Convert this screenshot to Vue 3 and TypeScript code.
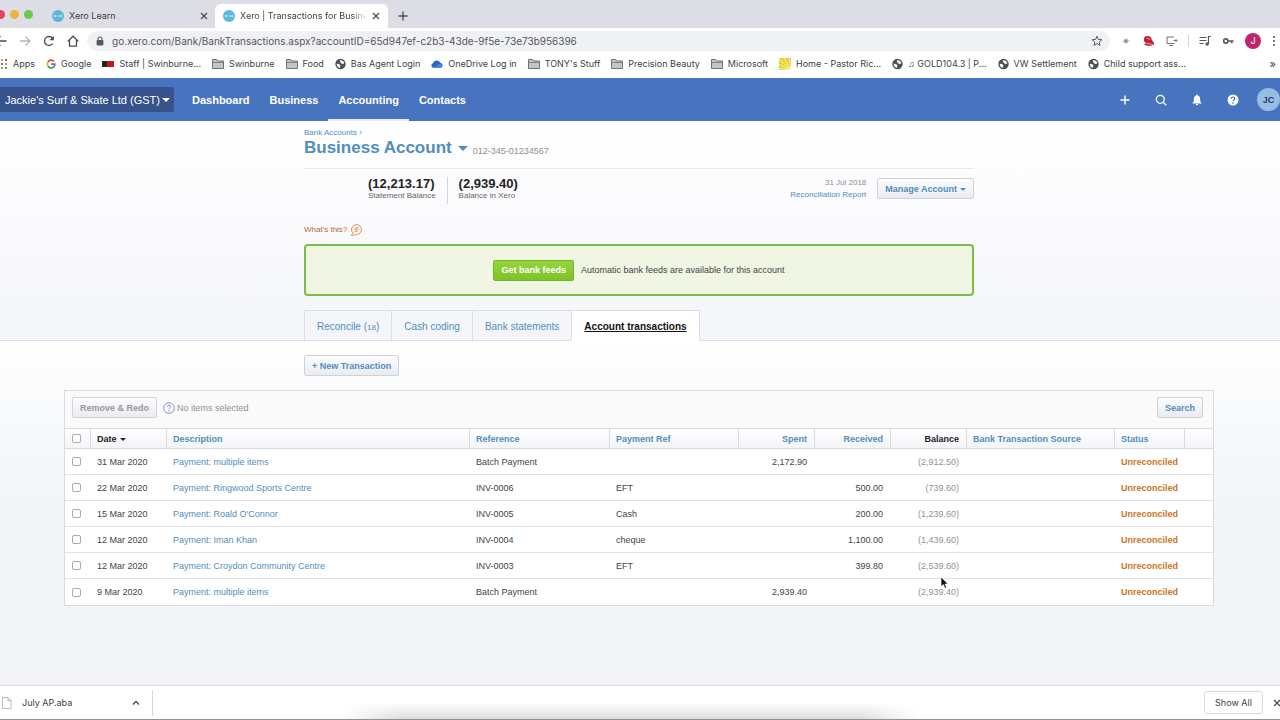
<script setup lang="ts">
import { ref } from 'vue'

interface Bookmark {
  icon: 'apps' | 'google' | 'staff' | 'folder' | 'globe' | 'cloud' | 'rays'
  label: string
}

interface Row {
  id: number
  date: string
  description: string
  reference: string
  paymentRef: string
  spent: string
  received: string
  balance: string
}

const address = ref('go.xero.com/Bank/BankTransactions.aspx?accountID=65d947ef-c2b3-43de-9f5e-73e73b956396')

const bookmarks: Bookmark[] = [
  { icon: 'apps', label: 'Apps' },
  { icon: 'google', label: 'Google' },
  { icon: 'staff', label: 'Staff | Swinburne...' },
  { icon: 'folder', label: 'Swinburne' },
  { icon: 'folder', label: 'Food' },
  { icon: 'globe', label: 'Bas Agent Login' },
  { icon: 'cloud', label: 'OneDrive Log in' },
  { icon: 'folder', label: "TONY's Stuff" },
  { icon: 'folder', label: 'Precision Beauty' },
  { icon: 'folder', label: 'Microsoft' },
  { icon: 'rays', label: 'Home - Pastor Ric...' },
  { icon: 'globe', label: '♫ GOLD104.3 | P...' },
  { icon: 'globe', label: 'VW Settlement' },
  { icon: 'globe', label: 'Child support ass...' },
]

const sections = ['Dashboard', 'Business', 'Accounting', 'Contacts']

const rows: Row[] = [
  { id: 1, date: '31 Mar 2020', description: 'Payment: multiple items', reference: 'Batch Payment', paymentRef: '', spent: '2,172.90', received: '', balance: '(2,912.50)' },
  { id: 2, date: '22 Mar 2020', description: 'Payment: Ringwood Sports Centre', reference: 'INV-0006', paymentRef: 'EFT', spent: '', received: '500.00', balance: '(739.60)' },
  { id: 3, date: '15 Mar 2020', description: "Payment: Roald O'Connor", reference: 'INV-0005', paymentRef: 'Cash', spent: '', received: '200.00', balance: '(1,239.60)' },
  { id: 4, date: '12 Mar 2020', description: 'Payment: Iman Khan', reference: 'INV-0004', paymentRef: 'cheque', spent: '', received: '1,100.00', balance: '(1,439.60)' },
  { id: 5, date: '12 Mar 2020', description: 'Payment: Croydon Community Centre', reference: 'INV-0003', paymentRef: 'EFT', spent: '', received: '399.80', balance: '(2,539.60)' },
  { id: 6, date: '9 Mar 2020', description: 'Payment: multiple items', reference: 'Batch Payment', paymentRef: '', spent: '2,939.40', received: '', balance: '(2,939.40)' },
]

const selected = ref<number[]>([])
</script>

<template>
  <div class="window">
    <header class="chrome">
      <div class="tabstrip">
        <div class="lights"><i class="red"></i><i class="amber"></i><i class="green"></i></div>
        <div class="tab">
          <svg class="fav" viewBox="0 0 12 12"><circle cx="6" cy="6" r="6" fill="#5fb4da" /><path d="M2 5l2 2M4 5L2 7M4.6 6h2M7.4 7V5.2M8.6 6a.8.8 0 1 0 1.6 0a.8.8 0 1 0-1.6 0" stroke="#d5eef8" stroke-width=".8" fill="none" /></svg>
          <span class="tab-title">Xero Learn</span>
          <button class="bare" aria-label="Close tab"><svg width="8" height="8" viewBox="0 0 8 8"><path d="M1 1l6 6M7 1L1 7" class="ink" /></svg></button>
        </div>
        <div class="tab current">
          <svg class="fav" viewBox="0 0 12 12"><circle cx="6" cy="6" r="6" fill="#5fb4da" /><path d="M2 5l2 2M4 5L2 7M4.6 6h2M7.4 7V5.2M8.6 6a.8.8 0 1 0 1.6 0a.8.8 0 1 0-1.6 0" stroke="#d5eef8" stroke-width=".8" fill="none" /></svg>
          <span class="tab-title">Xero | Transactions for Busine</span>
          <button class="bare" aria-label="Close tab"><svg width="8" height="8" viewBox="0 0 8 8"><path d="M1 1l6 6M7 1L1 7" class="ink" /></svg></button>
        </div>
        <button class="bare plus" aria-label="New tab"><svg width="10" height="10" viewBox="0 0 10 10"><path d="M5 .5v9M.5 5h9" class="ink" /></svg></button>
      </div>

      <div class="toolbar">
        <div class="nav-buttons">
          <button class="bare" aria-label="Back"><svg width="12" height="12" viewBox="0 0 12 12"><path d="M11.5 6H1M5.500 1.200L.7 6l4.800 4.800" class="ink" /></svg></button>
          <button class="bare" aria-label="Forward"><svg width="12" height="12" viewBox="0 0 12 12"><path d="M.8 6H11M6.500 1.500L11 6 6.500 10.500" fill="none" stroke="#b4b6ba" stroke-width="1.300" /></svg></button>
          <button class="bare" aria-label="Reload"><svg width="12" height="12" viewBox="0 0 12 12"><path d="M9.800 8.500A4.500 4.500 0 1 1 9.400 3" class="ink" /><path d="M10.900.8v4.400H6.500z" fill="#4a4d51" /></svg></button>
          <button class="bare" aria-label="Home"><svg width="12" height="12" viewBox="0 0 12 12"><path d="M.7 6.400L6 1.200l5.300 5.200M2.500 5v6.200h7V5" class="ink" /></svg></button>
        </div>
        <div class="omnibox">
          <svg width="8" height="10" viewBox="0 0 8 10"><path d="M2 4.500V3a2 2 0 0 1 4 0v1.500" fill="none" stroke="#55585c" stroke-width="1.100" /><rect x=".6" y="4" width="6.800" height="5.400" rx=".8" fill="#55585c" /></svg>
          <input v-model="address" type="text" aria-label="Address" />
          <button class="bare" aria-label="Bookmark this page"><svg width="12" height="12" viewBox="0 0 12 12"><path d="M6 1.200l1.400 3.200 3.500.3-2.700 2.300.8 3.400L6 8.600l-3 1.800.8-3.400L1.100 4.700l3.500-.3z" fill="none" stroke="#55585c" /></svg></button>
        </div>
        <div class="extensions">
          <svg width="12" height="12" viewBox="0 0 12 12"><path d="M2.500 6h7M4 4.200h4M4 7.800h4" stroke="#b0b0b3" stroke-width="1.100" /><circle cx="6" cy="6" r="1.500" fill="#85878b" /></svg>
          <svg width="12" height="12" viewBox="0 0 12 12"><path d="M2 1.500C4.500.2 8.500 1 8.500 4c0 1.500 2.500 2.500 2.800 5.500C8 11.500 4 11 1 9.500c1-.5 1.500-1 1-2C.5 6.500.5 3 2 1.500z" fill="#c21f2e" /><path d="M1 7.800c3 .3 6 1 9.500 2.300M3.500 3.500c1.500-.5 3 0 3.200 1.300" fill="none" stroke="#fff" stroke-width=".6" /></svg>
          <svg width="12" height="12" viewBox="0 0 12 12"><path d="M8 2H1v6.500h7.500M3 10.500h4M11 5.500H7.500M9.500 4L11 5.500 9.500 7" fill="none" stroke="#717478" /></svg>
          <i class="divider"></i>
          <svg width="12" height="12" viewBox="0 0 12 12"><path d="M.5 2.500h7M.5 5.500h7M.5 8.500h4M9.500 8.500v-7h2.300" fill="none" stroke="#55585c" stroke-width="1.200" /><circle cx="8.200" cy="9" r="1.700" fill="#55585c" /></svg>
          <svg width="12" height="12" viewBox="0 0 12 12"><circle cx="3.800" cy="6" r="2.100" fill="none" stroke="#55585c" stroke-width="1.600" /><path d="M6 6h5.500M9.700 6v2.200" stroke="#55585c" stroke-width="1.700" /></svg>
          <span class="profile">J</span>
          <button class="bare" aria-label="Menu"><svg width="4" height="12" viewBox="0 0 4 12"><circle cx="2" cy="2" r="1.100" fill="#55585c" /><circle cx="2" cy="6" r="1.100" fill="#55585c" /><circle cx="2" cy="10" r="1.100" fill="#55585c" /></svg></button>
        </div>
      </div>

      <nav class="bookmarks" aria-label="Bookmarks">
        <a v-for="b in bookmarks" :key="b.label" href="#" :class="b.icon">
          <svg v-if="b.icon === 'apps'" width="7" height="12" viewBox="0 0 7 12"><g><rect x="0" y="1" width="2" height="2" fill="#d9a13b" /><rect x="4" y="1" width="2" height="2" fill="#d2493e" /><rect x="0" y="5" width="2" height="2" fill="#4a76c4" /><rect x="4" y="5" width="2" height="2" fill="#d9a13b" /><rect x="0" y="9" width="2" height="2" fill="#d9a13b" /><rect x="4" y="9" width="2" height="2" fill="#4ba35b" /></g></svg>
          <svg v-else-if="b.icon === 'google'" width="10" height="12" viewBox="0 0 10 12"><g fill="none" stroke-width="1.700"><path d="M8 3.300A3.800 3.800 0 0 0 1.900 4" stroke="#e04a3c" /><path d="M1.900 4a3.900 3.900 0 0 0 0 4" stroke="#eebb2d" /><path d="M1.900 8A3.800 3.800 0 0 0 7.600 9" stroke="#3ba457" /><path d="M5.200 6.200h3.600c0 1.200-.4 2.200-1.200 2.900" stroke="#4579d8" /></g></svg>
          <svg v-else-if="b.icon === 'staff'" width="12" height="12" viewBox="0 0 12 12"><rect y="3" width="12" height="6" fill="#c4161c" /><rect y="3" width="5" height="6" fill="#252525" /></svg>
          <svg v-else-if="b.icon === 'folder'" width="12" height="12" viewBox="0 0 12 12"><path d="M.5 10.500v-9H4.600l1 1.500h5.900v7.500z" fill="#c4c5c7" stroke="#717377" /><path d="M1 4.500h10" stroke="#808286" /></svg>
          <svg v-else-if="b.icon === 'globe'" width="11" height="12" viewBox="0 0 11 12"><circle cx="5.500" cy="6" r="5.200" fill="#4d4f53" /><path d="M4.700 2.300c2-.5 4 .7 4.700 2.600L7.700 6.200 5.500 4.700l-.3-1.200zM1.700 5.700l2.300.4 1.500 1.500L4.600 10C2.700 9.300 1.700 7.700 1.700 5.700z" fill="#fff" /></svg>
          <svg v-else-if="b.icon === 'cloud'" width="12" height="12" viewBox="0 0 12 12"><path d="M2.500 9.800A2.300 2.300 0 0 1 2 5.300a3.900 3.900 0 0 1 7.200-.6 2.600 2.600 0 0 1 .3 5.100z" fill="#3068c0" /><path d="M3 9.800l4.500-3.900 3.900.7a2.300 2.300 0 0 1-1.900 3.200z" fill="#4288da" /></svg>
          <svg v-else width="12" height="12" viewBox="0 0 12 12"><rect width="12" height="12" fill="#e6cf32" /><path d="M12 12L0 1M12 12L0 6.500M12 12L5 0M12 12L10 0M12 12L0 10.500" stroke="#fff6b8" stroke-width=".9" /></svg>
          <span>{{ b.label }}</span>
        </a>
        <button class="bare more" aria-label="More bookmarks">»</button>
      </nav>
    </header>

    <header class="appbar">
      <button class="org">Jackie's Surf &amp; Skate Ltd (GST)<i class="caret"></i></button>
      <nav aria-label="Main">
        <a v-for="s in sections" :key="s" href="#" :class="{ on: s === 'Accounting' }">{{ s }}</a>
      </nav>
      <div class="tools">
        <button class="bare" aria-label="Add"><svg width="12" height="12" viewBox="0 0 12 12"><path d="M6 1.500v9M1.500 6h9" stroke="#fff" stroke-width="1.400" /></svg></button>
        <button class="bare" aria-label="Search"><svg width="12" height="12" viewBox="0 0 12 12"><circle cx="5.300" cy="5.300" r="4" fill="none" stroke="#fff" stroke-width="1.200" /><path d="M8.200 8.200l3 3" stroke="#fff" stroke-width="1.300" /></svg></button>
        <button class="bare" aria-label="Notifications"><svg width="12" height="12" viewBox="0 0 12 12"><path d="M6 .5c.6 0 .9.400.9.900C8.500 1.900 9.100 3.300 9.100 5c0 2.500.7 3.400 1.700 4.400H1.200C2.200 8.400 2.900 7.500 2.900 5c0-1.700.6-3.100 2.200-3.600 0-.5.3-.9.900-.9zM4.700 10h2.600a1.300 1.300 0 0 1-2.600 0z" fill="#fff" /></svg></button>
        <button class="bare" aria-label="Help"><svg width="12" height="12" viewBox="0 0 12 12"><circle cx="6" cy="6" r="5.500" fill="#fff" /><path d="M4.300 4.700c0-2.300 3.500-2.200 3.500 0C7.800 5.900 6 5.900 6 7.300" fill="none" stroke="#3f6cb6" stroke-width="1.200" /><circle cx="6" cy="9" r=".8" fill="#3f6cb6" /></svg></button>
        <button class="avatar">JC</button>
      </div>
    </header>

    <main>
      <section class="summary">
        <div class="column">
          <a class="crumb" href="#">Bank Accounts ›</a>
          <div class="title-row">
            <h1>Business Account</h1>
            <i class="caret big"></i>
            <span class="number">012-345-01234567</span>
          </div>
          <div class="balances">
            <div class="balance"><strong>(12,213.17)</strong><span>Statement Balance</span></div>
            <div class="balance"><strong>(2,939.40)</strong><span>Balance in Xero</span></div>
            <div class="report"><span>31 Jul 2018</span><a href="#">Reconciliation Report</a></div>
            <button class="btn manage">Manage Account<i class="caret small"></i></button>
          </div>
          <a class="what" href="#">What's this?
            <svg width="12" height="12" viewBox="0 0 12 12"><path d="M3 9.200A5 5 0 1 1 6.500 10.600C4.500 11.300 2.500 11.500 1 11.200 2.200 10.600 2.800 10 3 9.200z" fill="#fbf0e4" stroke="#c98e5c" stroke-width=".9" /><path d="M4.500 4h4M4.500 5.700h4M4.500 7.400h3" stroke="#cc9a6d" stroke-width=".9" /></svg>
          </a>
          <div class="feeds">
            <button class="green-btn">Get bank feeds</button>
            <span>Automatic bank feeds are available for this account</span>
          </div>
          <nav class="tabs" aria-label="Account">
            <a href="#">Reconcile (<small>18</small>)</a>
            <a href="#">Cash coding</a>
            <a href="#">Bank statements</a>
            <a href="#" class="on">Account transactions</a>
          </nav>
        </div>
      </section>

      <section class="transactions">
        <div class="column"><button class="btn">+ New Transaction</button></div>
        <div class="panel">
          <div class="panel-bar">
            <button class="btn muted">Remove &amp; Redo</button>
            <svg width="12" height="12" viewBox="0 0 12 12"><circle cx="6" cy="6" r="5.300" fill="#fff" stroke="#8093c4" /><path d="M4.400 4.800c0-2.200 3.300-2.100 3.300 0C7.700 6 6 5.900 6 7.200" fill="none" stroke="#6f86c0" /><circle cx="6" cy="8.800" r=".7" fill="#6f86c0" /></svg>
            <span>No items selected</span>
            <button class="btn search">Search</button>
          </div>
          <table>
            <colgroup>
              <col class="c-check" /><col class="c-num" /><col /><col class="c-ref" /><col class="c-pay" />
              <col class="c-num" /><col class="c-num" /><col class="c-num" /><col class="c-source" /><col class="c-status" /><col class="c-end" />
            </colgroup>
            <thead>
              <tr>
                <th><input type="checkbox" aria-label="Select all" /></th>
                <th class="dark">Date<i class="caret small"></i></th>
                <th>Description</th>
                <th>Reference</th>
                <th>Payment Ref</th>
                <th class="num">Spent</th>
                <th class="num">Received</th>
                <th class="num dark">Balance</th>
                <th>Bank Transaction Source</th>
                <th>Status</th>
                <th></th>
              </tr>
            </thead>
            <tbody>
              <tr v-for="r in rows" :key="r.id">
                <td><input v-model="selected" type="checkbox" :value="r.id" :aria-label="`Select ${r.description}, ${r.date}`" /></td>
                <td>{{ r.date }}</td>
                <td><a href="#">{{ r.description }}</a></td>
                <td>{{ r.reference }}</td>
                <td>{{ r.paymentRef }}</td>
                <td class="num">{{ r.spent }}</td>
                <td class="num">{{ r.received }}</td>
                <td class="num faded">{{ r.balance }}</td>
                <td></td>
                <td class="status">Unreconciled</td>
                <td></td>
              </tr>
            </tbody>
          </table>
          <svg class="pointer" width="9" height="14" viewBox="0 0 9 14"><path d="M1 1v9.600l2.300-2 1.600 3.700 1.700-.8L5 8h3.200z" fill="#111" stroke="#fff" stroke-width=".7" /></svg>
        </div>
      </section>
    </main>

    <footer class="downloads">
      <button class="file">
        <svg width="12" height="12" viewBox="0 0 12 12"><path d="M1.500.5h5.500l3 3v8H1.500zM7 .5v3h3" fill="#fff" stroke="#b9bbbf" /></svg>
        <span>July AP.aba</span>
        <svg width="8" height="8" viewBox="0 0 8 8"><path d="M1 5.500l3-3 3 3" class="ink" /></svg>
      </button>
      <i class="glow"></i>
      <button class="show-all">Show All</button>
      <button class="bare" aria-label="Close downloads"><svg width="8" height="8" viewBox="0 0 8 8"><path d="M1 1l6 6M7 1L1 7" class="ink" /></svg></button>
    </footer>
  </div>
</template>

<style>
body {
  margin: 0;
  overflow-x: hidden;
}
</style>

<style scoped>
* {
  box-sizing: border-box;
}
.window {
  display: flex;
  flex-direction: column;
  min-height: 100vh;
  font-family: "Liberation Sans", Arial, sans-serif;
  font-size: 9px;
  line-height: 12px;
  color: #444;
}
button,
input {
  font: inherit;
  margin: 0;
}
a {
  color: #528dbd;
  text-decoration: none;
}
svg {
  display: block;
  flex: none;
}
.ink {
  fill: none;
  stroke: #4a4d51;
  stroke-width: 1.3;
}
.bare {
  display: flex;
  border: 0;
  padding: 0;
  background: none;
  color: inherit;
}
.caret {
  display: inline-block;
  border: 4px solid transparent;
  border-top-color: currentColor;
  border-bottom: 0;
}
.caret.small {
  border-width: 3px 3px 0;
}
.caret.big {
  border-width: 5px 5px 0;
}

/* Browser frame */
.chrome {
  font-family: Inter, Roboto, sans-serif;
  color: #3c3f43;
  background: #fff;
}
.tabstrip {
  display: flex;
  align-items: flex-end;
  height: 28px;
  background: #dddde5;
}
.lights {
  display: flex;
  align-items: center;
  gap: 5px;
  width: 44px;
  height: 28px;
  margin-left: -4px;
}
.lights i {
  width: 9px;
  height: 9px;
  border-radius: 50%;
}
.red {
  background: #e0475a;
}
.amber {
  background: #eab53e;
}
.green {
  background: #6ccb4d;
}
.tab {
  display: flex;
  align-items: center;
  gap: 5px;
  width: 175px;
  height: 24px;
  padding: 0 7px 0 12px;
}
.tab.current {
  width: 173px;
  padding: 0 8px;
  background: #fff;
  border-radius: 6px 6px 0 0;
}
.fav {
  width: 12px;
  height: 12px;
}
.tab-title {
  flex: 1;
  min-width: 0;
  overflow: hidden;
  white-space: nowrap;
}
.current .tab-title {
  mask-image: linear-gradient(90deg, #000 88%, transparent);
}
.plus {
  margin: 0 10px 7px;
}
.toolbar {
  display: flex;
  align-items: center;
  padding: 3px 4px 1px 0;
}
.nav-buttons {
  display: flex;
  gap: 12px;
  width: 88px;
  margin-left: -5px;
}
.omnibox {
  display: flex;
  flex: 1;
  align-items: center;
  gap: 8px;
  height: 20px;
  margin-left: 4px;
  padding: 0 7px 0 9px;
  border-radius: 10px;
  background: #f0f1f4;
}
.omnibox input {
  flex: 1;
  min-width: 0;
  border: 0;
  padding: 0;
  background: none;
  font-size: 10px;
  color: #54575c;
  outline: 0;
}
.extensions {
  display: flex;
  align-items: center;
  gap: 11px;
  margin-left: 10px;
}
.divider {
  width: 1px;
  height: 12px;
  margin: 0 -1px;
  background: #d5d7da;
}
.profile {
  width: 16px;
  border-radius: 50%;
  background: #bd256f;
  color: #fff;
  line-height: 16px;
  text-align: center;
}
.bookmarks {
  display: flex;
  align-items: center;
  gap: 11px;
  height: 26px;
  padding: 0 4px 2px 1px;
  white-space: nowrap;
}
.bookmarks a {
  display: flex;
  align-items: center;
  gap: 5px;
  color: #3c3f43;
}
.more {
  margin-left: auto;
  font-size: 11px;
}

/* Application bar */
.appbar {
  display: flex;
  align-items: center;
  height: 43px;
  background: #4874bf;
  color: #fff;
  font-size: 11px;
}
.org {
  display: flex;
  align-items: center;
  justify-content: space-between;
  width: 174px;
  height: 25px;
  border: 0;
  border-radius: 0 2px 2px 0;
  padding: 0 4px 0 5px;
  background: #37538b;
  color: #fff;
  white-space: nowrap;
}
.appbar nav {
  display: flex;
  align-self: stretch;
  margin-left: 8px;
}
.appbar nav a {
  padding: 15px 10px 0;
  border-bottom: 2px solid transparent;
  color: #fff;
  font-weight: 700;
  line-height: 14px;
}
.appbar nav .on {
  border-color: #e6edfa;
}
.tools {
  display: flex;
  align-items: center;
  gap: 24px;
  margin-left: auto;
}
.avatar {
  width: 23px;
  height: 23px;
  margin-left: -6px;
  border: 0;
  border-radius: 50%;
  padding: 0;
  background: #98bce2;
  color: #20406e;
  font-size: 9px;
  font-weight: 700;
}

/* Account summary */
main {
  display: flex;
  flex: 1;
  flex-direction: column;
}
.summary {
  padding: 6px 2px 0 0;
  border-bottom: 1px solid #dcdee3;
  background: linear-gradient(#fff, #f4f5fa);
}
.column {
  max-width: 670px;
  margin: 0 auto;
}
.crumb {
  display: block;
  font-size: 8px;
}
.title-row {
  display: flex;
  align-items: center;
  height: 29px;
  padding-bottom: 11px;
}
h1 {
  margin: 0;
  color: #528dbd;
  font-size: 17px;
  line-height: 20px;
}
.title-row .caret {
  margin: 0 5px 0 6px;
  color: #528dbd;
}
.number {
  align-self: flex-end;
  color: #909090;
}
.balances {
  display: flex;
  padding: 8px 0 0 53px;
  border-top: 1px solid #e8e9eb;
}
.balance {
  padding: 0 11px;
}
.balance + .balance {
  height: 27px;
  border-left: 1px solid #d4d6da;
}
.balance strong,
.balance span {
  display: block;
}
.balance strong {
  color: #222;
  font-size: 13px;
  line-height: 14px;
}
.balance span {
  color: #666;
  font-size: 8px;
  line-height: 10px;
}
.report {
  display: flex;
  flex-direction: column;
  margin-left: auto;
  color: #8c8c8c;
  font-size: 8px;
  text-align: right;
}
.btn {
  height: 21px;
  border: 1px solid #cfd2d8;
  border-radius: 2px;
  padding: 0 7px;
  background: linear-gradient(#fdfdfe, #e9ebf1);
  color: #528dbd;
  font-weight: 700;
  white-space: nowrap;
}
.btn.manage {
  margin: 1px 0 0 11px;
}
.manage .caret {
  margin: 0 0 1px 3px;
}
.what {
  display: flex;
  align-items: center;
  gap: 3px;
  margin-top: 20px;
  color: #b5693b;
  font-size: 8px;
}
.feeds {
  display: flex;
  align-items: center;
  justify-content: center;
  gap: 7px;
  height: 52px;
  margin: 8px 0 14px;
  border: 2px solid #7fbb49;
  border-radius: 4px;
  background: #f0f5e4;
}
.green-btn {
  height: 21px;
  border: 1px solid #74b42d;
  border-radius: 2px;
  padding: 0 7px;
  background: linear-gradient(#96d53c, #7fc12a);
  color: #fff;
  font-weight: 700;
}
.tabs {
  display: flex;
  margin-bottom: -1px;
  font-size: 10px;
}
.tabs a {
  height: 31px;
  padding: 10px 12px 0;
  border: 1px solid #dcdee3;
  border-right: 0;
}
.tabs .on {
  border-right: 1px solid #dcdee3;
  border-bottom-color: #fff;
  background: #fff;
  color: #111;
  font-weight: 700;
  text-decoration: underline;
}
.tabs small {
  font-size: 8px;
}

/* Transactions */
.transactions {
  flex: 1;
  padding: 14px 66px 32px 64px;
  background: linear-gradient(#fff, #f8f9fb 80px, #f3f4f8 180px);
}
.panel {
  position: relative;
  margin-top: 14px;
  border: 1px solid #d9dbdf;
  background: #fff;
}
.panel-bar {
  display: flex;
  align-items: center;
  height: 37px;
  padding: 2px 10px 6px 7px;
  background: #fafafa;
  color: #909090;
}
.panel-bar svg {
  margin: 0 2px 0 6px;
}
.muted {
  color: #999;
}
.search {
  margin-left: auto;
}
table {
  width: 100%;
  border-collapse: separate;
  border-spacing: 0;
  table-layout: fixed;
}
.c-check {
  width: 26px;
}
.c-num {
  width: 76px;
}
.c-ref {
  width: 140px;
}
.c-pay {
  width: 129px;
}
.c-source {
  width: 148px;
}
.c-status {
  width: 70px;
}
.c-end {
  width: 28px;
}
th,
td {
  padding: 0 7px 0 6px;
  text-align: left;
  white-space: nowrap;
}
th {
  height: 21px;
  border: solid #d9dbdf;
  border-width: 1px 1px 1px 0;
  background: linear-gradient(#fff, #f3f4f8);
  color: #528dbd;
}
th:last-child {
  border-right: 0;
}
td {
  height: 26px;
  border-bottom: 1px solid #e1e2e5;
}
tr:last-child td {
  border-bottom: 0;
}
.dark {
  color: #222;
}
.dark .caret {
  margin: 0 0 1px 3px;
}
td.num {
  padding-right: 8px;
}
.num {
  text-align: right;
}
.faded {
  color: #929292;
}
.status {
  color: #cb7425;
  font-weight: 700;
}
table input {
  display: block;
  width: 9px;
  height: 9px;
  margin-left: 1px;
  appearance: none;
  border: 1px solid #aaa;
  border-radius: 2px;
  background: #fff;
}
table input:checked {
  background: #528dbd;
}
.pointer {
  position: absolute;
  right: 264px;
  bottom: 15px;
}

/* Download shelf */
.downloads {
  display: flex;
  align-items: center;
  height: 35px;
  border-top: 1px solid #dcdde2;
  border-bottom: 1px solid #919295;
  background: #fff;
  color: #3c3f43;
  font-family: Inter, Roboto, sans-serif;
}
.file {
  display: flex;
  align-items: center;
  gap: 9px;
  width: 153px;
  height: 26px;
  border: 0;
  border-right: 1px solid #d5d6d9;
  padding: 0 12px 0 1px;
  background: none;
  color: inherit;
}
.file span {
  flex: 1;
  text-align: left;
}
.glow {
  flex: 1;
  align-self: stretch;
  margin: 0 284px 0 187px;
  background: linear-gradient(transparent 50%, #dedede);
  mask-image: linear-gradient(90deg, transparent, #000 10%, #000 90%, transparent);
}
.show-all {
  width: 59px;
  height: 23px;
  border: 1px solid #d9dadd;
  border-radius: 3px;
  padding: 0;
  background: #fff;
  color: inherit;
}
.downloads .bare {
  margin: 0 -1px 0 10px;
}
</style>
